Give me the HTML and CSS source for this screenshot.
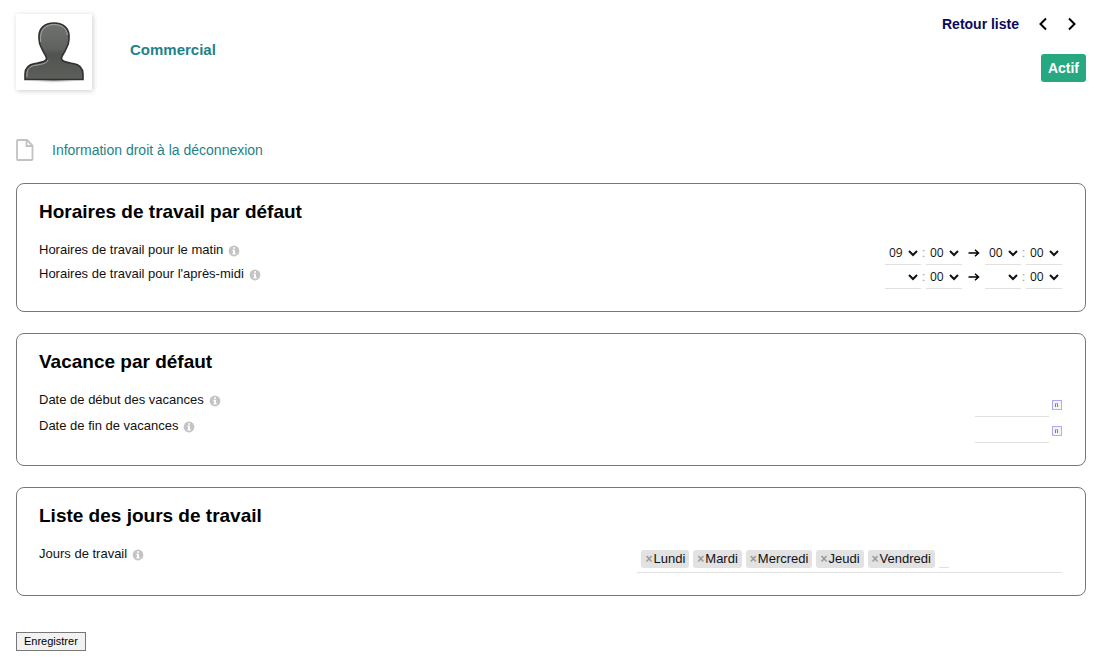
FILE: index.html
```html
<!DOCTYPE html>
<html lang="fr">
<head>
    <meta charset="UTF-8">
    <meta name="viewport" content="width=device-width, initial-scale=1.0">
    <title>Commercial</title>
    <link rel="stylesheet" href="styles.css">
</head>
<body>
    <svg width="0" height="0" class="sprite">
        <symbol id="info" viewBox="0 0 12 12">
            <circle cx="6" cy="6" r="5.4" fill="#c4c4c4"/>
            <path d="M5 2.2h2v1.6H5zM4.4 4.8H7v3.4h.7v1.2H4.4V8.2H5V6h-.6z" fill="#fff"/>
        </symbol>
        <symbol id="arrow" viewBox="0 0 12 10">
            <path d="M0.5 5H10.5M7 1.8L10.5 5L7 8.2" fill="none" stroke="#000" stroke-width="1.5"/>
        </symbol>
        <symbol id="calendar" viewBox="0 0 10 10">
            <rect x="0.5" y="0.5" width="9" height="9" fill="#f4f4f8" stroke="#b8b8c4"/>
            <path d="M0.5 9V0.5H9" fill="none" stroke="#a8a8f4"/>
            <path d="M3.500 3v4M5.500 3v4" stroke="#a060c8"/>
            <path d="M3 3.500h3" stroke="#c8a0e0"/>
        </symbol>
    </svg>

    <header class="banner">
        <div class="photo">
            <svg width="64" height="64" viewBox="0 0 64 64">
                <defs>
                    <linearGradient id="body" x1="0" y1="0" x2="0" y2="1">
                        <stop offset="0" stop-color="#70736f"/>
                        <stop offset="0.45" stop-color="#5f625e"/>
                        <stop offset="0.55" stop-color="#50534f"/>
                        <stop offset="1" stop-color="#5c5f5a"/>
                    </linearGradient>
                    <radialGradient id="ground">
                        <stop offset="0" stop-color="#777"/>
                        <stop offset="1" stop-color="#fff" stop-opacity="0"/>
                    </radialGradient>
                </defs>
                <ellipse cx="32" cy="60" rx="29" ry="3.500" fill="url(#ground)"/>
                <path d="M3 59.500V54C3 47 7 44.500 13 43.500C19 42.500 24 42 24.500 39C25 36 22 34 20 29C18 26 17 23 17 19C16 8 23 3 32 3C41 3 48 8 47 19C47 23 46 26 44 29C42 34 39 36 39.500 39C40 42 45 42.500 51 43.500C57 44.500 61 47 61 54V59.500Z" fill="url(#body)" stroke="#303230" stroke-width="1.600"/>
                <path d="M18.800 22C17 9 24 4.600 32 4.600C40 4.600 45 9 45.400 15M5 57V54C5 48 9 46 14 45.200C20 44.200 25 43.500 26 40" fill="none" stroke="#a4a7a4" stroke-width="1"/>
            </svg>
        </div>
        <h1 class="name">Commercial</h1>
        <div class="banner-right">
            <nav class="pager">
                <a href="#" class="back">Retour liste</a>
                <a href="#" aria-label="Précédent"><svg width="10" height="14" viewBox="0 0 10 14"><path d="M8 1.500L2.500 7L8 12.500" fill="none" stroke="#000" stroke-width="2"/></svg></a>
                <a href="#" aria-label="Suivant"><svg width="10" height="14" viewBox="0 0 10 14"><path d="M2 1.500L7.500 7L2 12.500" fill="none" stroke="#000" stroke-width="2"/></svg></a>
            </nav>
            <span class="status">Actif</span>
        </div>
    </header>

    <div class="page-title">
        <svg width="18" height="22" viewBox="0 0 18 22">
            <path d="M2 1H11L16.500 6.500V20Q16.500 21 15.500 21H2Q1 21 1 20V2Q1 1 2 1ZM10.500 1V7H16.500" fill="none" stroke="#c2c2c2" stroke-width="1.800"/>
        </svg>
        <span>Information droit à la déconnexion</span>
    </div>

    <form>
        <section class="card">
            <h2>Horaires de travail par défaut</h2>
            <div class="row">
                <label for="am-start">Horaires de travail pour le matin <svg class="info"><use href="#info"/></svg></label>
                <div class="hours">
                    <select id="am-start"><option>09</option></select>
                    <span class="colon">:</span>
                    <select aria-label="Minutes de début, matin"><option>00</option></select>
                    <svg class="arrow"><use href="#arrow"/></svg>
                    <select aria-label="Heure de fin, matin"><option>00</option></select>
                    <span class="colon">:</span>
                    <select aria-label="Minutes de fin, matin"><option>00</option></select>
                </div>
            </div>
            <div class="row">
                <label for="pm-start">Horaires de travail pour l'après-midi <svg class="info"><use href="#info"/></svg></label>
                <div class="hours">
                    <select id="pm-start"><option></option></select>
                    <span class="colon">:</span>
                    <select aria-label="Minutes de début, après-midi"><option>00</option></select>
                    <svg class="arrow"><use href="#arrow"/></svg>
                    <select aria-label="Heure de fin, après-midi"><option></option></select>
                    <span class="colon">:</span>
                    <select aria-label="Minutes de fin, après-midi"><option>00</option></select>
                </div>
            </div>
        </section>

        <section class="card">
            <h2>Vacance par défaut</h2>
            <div class="row">
                <label for="date-start">Date de début des vacances <svg class="info"><use href="#info"/></svg></label>
                <div class="date">
                    <input type="text" id="date-start">
                    <button type="button" aria-label="Calendrier"><svg><use href="#calendar"/></svg></button>
                </div>
            </div>
            <div class="row">
                <label for="date-end">Date de fin de vacances <svg class="info"><use href="#info"/></svg></label>
                <div class="date">
                    <input type="text" id="date-end">
                    <button type="button" aria-label="Calendrier"><svg><use href="#calendar"/></svg></button>
                </div>
            </div>
        </section>

        <section class="card">
            <h2>Liste des jours de travail</h2>
            <div class="row">
                <label for="days">Jours de travail <svg class="info"><use href="#info"/></svg></label>
                <div class="tags">
                    <span class="tag"><button type="button">×</button>Lundi</span>
                    <span class="tag"><button type="button">×</button>Mardi</span>
                    <span class="tag"><button type="button">×</button>Mercredi</span>
                    <span class="tag"><button type="button">×</button>Jeudi</span>
                    <span class="tag"><button type="button">×</button>Vendredi</span>
                    <input type="text" id="days">
                </div>
            </div>
        </section>

        <button type="submit" class="save">Enregistrer</button>
    </form>
</body>
</html>
```
FILE: styles.css
```css
* {
    box-sizing: border-box;
}
body {
    margin: 0;
    padding: 14px 15px 16px 16px;
    background: #fff;
    color: #111;
    font-family: "Liberation Sans", Arial, sans-serif;
    font-size: 13px;
    line-height: 18px;
}
svg {
    display: block;
}
a {
    text-decoration: none;
}
.sprite {
    position: absolute;
}

/* Banner */
.banner {
    display: flex;
    align-items: flex-start;
}
.photo {
    padding: 6px;
    background: #fff;
    box-shadow: 1px 1px 5px rgba(0, 0, 0, 0.2);
}
.name {
    margin: 26px 0 0 38px;
    color: #1f8289;
    font-size: 15px;
    line-height: 20px;
}
.banner-right {
    display: flex;
    flex-direction: column;
    align-items: flex-end;
    gap: 20px;
    margin-left: auto;
}
.pager {
    display: flex;
    align-items: center;
    gap: 19px;
    height: 20px;
    padding-right: 9px;
}
.back {
    color: #0a0a5a;
    font-size: 14px;
    font-weight: bold;
}
.status {
    padding: 5px 7px;
    border-radius: 3px;
    background: #26a981;
    color: #fff;
    font-size: 14px;
    font-weight: bold;
}

/* Page title */
.page-title {
    display: flex;
    align-items: center;
    gap: 18px;
    margin: 49px 0 22px;
    color: #1f8289;
    font-size: 14px;
}

/* Cards */
.card {
    margin-bottom: 21px;
    padding: 16px 23px 22px 22px;
    border: 1px solid #777;
    border-radius: 8px;
}
.card h2 {
    margin: 0 0 17px;
    color: #000;
    font-size: 19px;
    line-height: 24px;
}
.row {
    display: flex;
    justify-content: space-between;
    align-items: flex-start;
}
.row label {
    display: flex;
    align-items: center;
    gap: 5px;
}
.info {
    width: 12px;
    height: 12px;
    margin-top: 2px;
}

.hours {
    display: flex;
    align-items: center;
}
.hours select {
    width: 36px;
    height: 24px;
    padding: 0;
    border: 0;
    border-bottom: 1px solid #e0e0e0;
    border-radius: 0;
    background: transparent;
    color: #111;
    font-family: "Open Sans", sans-serif;
    font-size: 12px;
}
.colon {
    width: 5px;
    color: #a98;
    text-align: center;
}
.arrow {
    width: 12px;
    height: 10px;
    margin: 0 5px 0 6px;
}

.date {
    display: flex;
    align-items: center;
    gap: 3px;
}
.date input {
    width: 74px;
    height: 26px;
    padding: 0;
    border: 0;
    border-bottom: 1px solid #e0e0e0;
}
.date button {
    padding: 2px 0 0;
    border: 0;
    background: none;
}
.date svg {
    width: 10px;
    height: 10px;
}

.tags {
    display: flex;
    align-items: center;
    gap: 4px;
    width: 41.5%;
    height: 28px;
    padding-left: 4px;
    border-bottom: 1px solid #e0e0e0;
}
.tag {
    display: flex;
    padding: 0 4px;
    border-radius: 3px;
    background: #e2e2e2;
}
.tag button {
    padding: 0 1px 0 0;
    border: 0;
    background: none;
    color: #999;
    font: bold 12px "Liberation Sans", Arial, sans-serif;
}
.tags input {
    width: 10px;
    height: 18px;
    padding: 0;
    border: 0;
    border-bottom: 1px solid #e0e0e0;
}

.save {
    display: block;
    margin-top: 36px;
    padding: 0 7px;
    border: 1px solid #777;
    background: #f2f2f2;
    color: #000;
    font-family: inherit;
    font-size: 11px;
    line-height: 17px;
}
```
